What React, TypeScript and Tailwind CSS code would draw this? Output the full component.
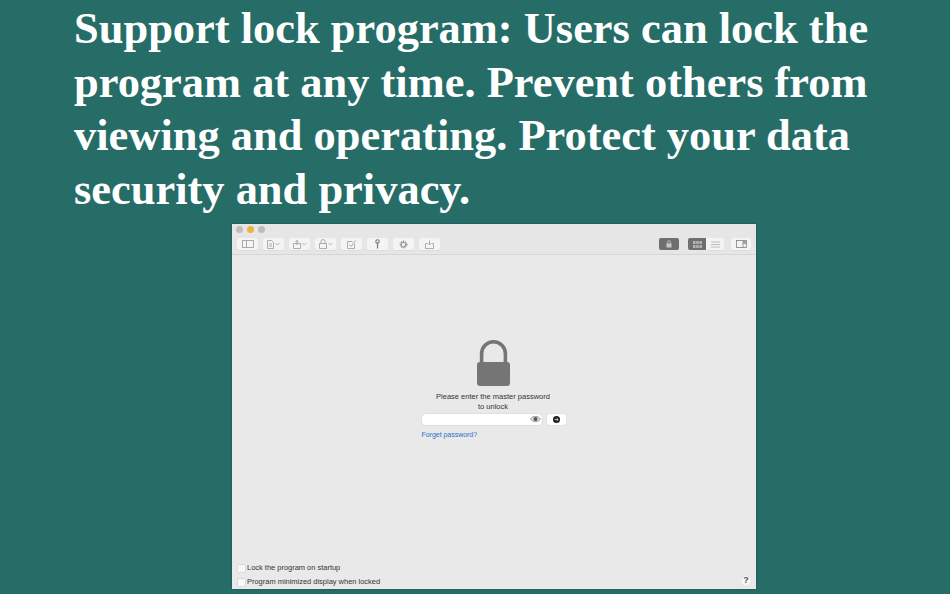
/**
 * Promo screenshot: headline over the locked app window
 */

const ICON = 'stroke-[#9a9a9a] fill-none'

function ToolButton({ children, chevron = false }: { children: React.ReactNode; chevron?: boolean }) {
  return (
    <div className="w-[21px] h-[12px] bg-[#f4f4f4] rounded-[2px] flex items-center justify-center shadow-[0_0.5px_0.5px_rgba(0,0,0,0.08)] gap-[1px]">
      {children}
      {chevron && (
        <svg width="5" height="4" viewBox="0 0 5 4" className={ICON}>
          <path d="M0.5 1 L2.5 3 L4.5 1" strokeWidth="0.7" />
        </svg>
      )}
    </div>
  )
}

function Checkbox({ label }: { label: string }) {
  return (
    <div className="flex items-center gap-[1px] h-[14px]">
      <div className="w-[9px] h-[9px] bg-[#f8f8f8] rounded-[1.5px] border border-[#d8d8d8]" />
      <span className="text-[7.5px] tracking-[-0.02px] text-[#222] opacity-90">{label}</span>
    </div>
  )
}

export default function App() {
  return (
    <div className="w-[950px] h-[594px] bg-[#266d68] overflow-hidden flex flex-col font-['Liberation_Sans',sans-serif]">
      <h1 className="pl-[74px] pt-[2px] text-[44.45px] leading-[53.5px] font-bold text-white font-['Liberation_Serif',serif] whitespace-nowrap h-[224px] shrink-0">
        Support lock program: Users can lock the
        <br />
        program at any time. Prevent others from
        <br />
        viewing and operating. Protect your data
        <br />
        security and privacy.
      </h1>

      {/* App window */}
      <div className="ml-[232px] w-[524px] h-[365px] bg-[#e9e9e9] flex flex-col shrink-0 shadow-[0_0_2px_rgba(0,0,0,0.3)]">
        {/* Title bar + toolbar */}
        <div className="h-[31px] bg-[#e6e6e6] border-b border-[#d6d6d6] flex flex-col px-[5px] pt-[2px]">
          <div className="flex gap-[4px] ml-[-1px]">
            <div className="w-[7px] h-[7px] rounded-full bg-[#bdbdbd]" />
            <div className="w-[7px] h-[7px] rounded-full bg-[#f0b040]" />
            <div className="w-[7px] h-[7px] rounded-full bg-[#bdbdbd]" />
          </div>
          <div className="flex items-center mt-[5px]">
            <div className="flex gap-[5px]">
              <ToolButton>
                <svg width="12" height="8" viewBox="0 0 12 8" className={ICON}>
                  <rect x="0.5" y="0.5" width="11" height="7" strokeWidth="0.8" />
                  <path d="M4.5 0.5 V7.5" strokeWidth="0.8" />
                </svg>
              </ToolButton>
              <ToolButton chevron>
                <svg width="7" height="9" viewBox="0 0 7 9" className={ICON}>
                  <path d="M0.5 0.5 H4.5 L6.5 2.5 V8.5 H0.5 Z M2 4 H5 M2 6 H5" strokeWidth="0.8" />
                </svg>
              </ToolButton>
              <ToolButton chevron>
                <svg width="8" height="9" viewBox="0 0 8 9" className={ICON}>
                  <path d="M0.5 3.5 H7.5 V8.5 H0.5 Z M4 5 V0.5 M2.5 2 L4 0.5 L5.5 2" strokeWidth="0.8" />
                </svg>
              </ToolButton>
              <ToolButton chevron>
                <svg width="8" height="10" viewBox="0 0 8 10" className={ICON}>
                  <path d="M0.5 4.5 H7.5 V9.5 H0.5 Z M2 4.5 V2.5 A2 2 0 0 1 6 2.5 V4.5" strokeWidth="0.8" />
                </svg>
              </ToolButton>
              <ToolButton>
                <svg width="9" height="9" viewBox="0 0 9 9" className={ICON}>
                  <path d="M7.5 3.5 V8.5 H0.5 V1.5 H5.5 M2.5 4.5 L4 6.5 L8.5 0.5" strokeWidth="0.8" />
                </svg>
              </ToolButton>
              <ToolButton>
                <svg width="5" height="10" viewBox="0 0 5 10" className="stroke-[#777] fill-none">
                  <circle cx="2.5" cy="2.5" r="1.7" strokeWidth="1.1" />
                  <path d="M2.5 4 V9.5" strokeWidth="1.2" />
                </svg>
              </ToolButton>
              <ToolButton>
                <svg width="9" height="9" viewBox="0 0 9 9" className="stroke-[#8a8a8a] fill-none">
                  <circle cx="4.5" cy="4.5" r="2.4" strokeWidth="1.6" strokeDasharray="1.2 0.4" />
                  <circle cx="4.5" cy="4.5" r="3.6" strokeWidth="0.8" strokeDasharray="1.2 1.1" />
                </svg>
              </ToolButton>
              <ToolButton>
                <svg width="9" height="9" viewBox="0 0 9 9" className={ICON}>
                  <path d="M2.5 3.5 H0.5 V8.5 H8.5 V3.5 H6.5 M4.5 0.5 V5 M3 3.5 L4.5 5 L6 3.5" strokeWidth="0.8" />
                </svg>
              </ToolButton>
            </div>
            <div className="ml-auto flex items-center">
              <div className="w-[20px] h-[12px] bg-[#6f6f6f] rounded-[2px] flex items-center justify-center">
                <svg width="6" height="8" viewBox="0 0 6 8">
                  <path d="M1.5 3.5 V2.2 A1.5 1.5 0 0 1 4.5 2.2 V3.5" fill="none" stroke="#c8c8c8" strokeWidth="0.8" />
                  <rect x="0.5" y="3.3" width="5" height="4.2" fill="#c8c8c8" />
                </svg>
              </div>
              <div className="ml-[9px] w-[18px] h-[12px] bg-[#6f6f6f] rounded-l-[2px] flex items-center justify-center">
                <svg width="9" height="7" viewBox="0 0 9 7" fill="#b5b5b5">
                  <rect x="0" y="0" width="2.5" height="3" />
                  <rect x="3.2" y="0" width="2.5" height="3" />
                  <rect x="6.4" y="0" width="2.5" height="3" />
                  <rect x="0" y="4" width="2.5" height="3" />
                  <rect x="3.2" y="4" width="2.5" height="3" />
                  <rect x="6.4" y="4" width="2.5" height="3" />
                </svg>
              </div>
              <div className="w-[18px] h-[12px] bg-[#f4f4f4] rounded-r-[2px] flex items-center justify-center shadow-[0_0.5px_0.5px_rgba(0,0,0,0.08)]">
                <svg width="9" height="7" viewBox="0 0 9 7" className="stroke-[#b0b0b0] fill-none">
                  <path d="M0 1 H9 M0 3.5 H9 M0 6 H9" strokeWidth="0.8" />
                </svg>
              </div>
              <div className="ml-[7px] w-[20px] h-[12px] bg-[#f4f4f4] rounded-[2px] flex items-center justify-center shadow-[0_0.5px_0.5px_rgba(0,0,0,0.08)]">
                <svg width="11" height="8" viewBox="0 0 11 8" className="stroke-[#808080] fill-none">
                  <rect x="0.5" y="0.5" width="10" height="7" strokeWidth="0.8" />
                  <path d="M7 0.5 V7.5" strokeWidth="0.8" />
                  <rect x="7" y="0.5" width="3.5" height="3.5" fill="#a0a0a0" stroke="none" />
                </svg>
              </div>
            </div>
          </div>
        </div>

        {/* Lock form */}
        <div className="flex-1 flex flex-col items-center pt-[85px] relative">
          <svg width="33" height="46" viewBox="0 0 33 46" className="ml-[-1px]">
            <path d="M4.6 24 V13.7 A11.9 11.9 0 0 1 28.4 13.7 V24" fill="none" stroke="#757575" strokeWidth="3.6" />
            <rect x="0" y="22" width="33" height="24" rx="3" fill="#757575" />
          </svg>
          <p className="mt-[6px] text-[7.5px] leading-[9.5px] text-center text-[#222] opacity-90 w-[130px] ml-[-2px]">
            Please enter the master password
            <br />
            to unlock
          </p>
          <div className="mt-[2px] flex items-center gap-[5px] ml-[-1px]">
            <div className="w-[120px] h-[11px] bg-white rounded-[3px] shadow-[0_0_1px_rgba(0,0,0,0.35)] flex items-center justify-end pr-[1px]">
              <svg width="11" height="8" viewBox="0 0 11 8">
                <path d="M0.5 4 C3 0.5 8 0.5 10.5 4 C8 7.5 3 7.5 0.5 4 Z" fill="#e0e0e0" stroke="#777" strokeWidth="0.7" />
                <circle cx="5.5" cy="4" r="2" fill="#555" />
              </svg>
            </div>
            <div className="w-[19px] h-[11px] mt-[1px] bg-white rounded-[2px] shadow-[0_0_1px_rgba(0,0,0,0.3)] flex items-center justify-center">
              <svg width="7" height="7" viewBox="0 0 7 7">
                <circle cx="3.5" cy="3.5" r="3.5" fill="#1d1d1d" />
                <path d="M1.5 3.5 H5 M3.6 2 L5.2 3.5 L3.6 5" fill="none" stroke="#fff" strokeWidth="0.7" />
              </svg>
            </div>
          </div>
          <div className="w-[144px] mt-[5px] ml-[-1px]">
            <span className="text-[7px] tracking-[-0.03px] leading-[10px] block text-[#2b6fd0]">Forget password?</span>
          </div>

          <div className="absolute right-[5px] bottom-[3px] w-[10px] h-[10px] rounded-full bg-[#f7f7f7] flex items-center justify-center text-[9px] font-bold text-[#555] shadow-[0_0_1px_rgba(0,0,0,0.2)]">
            ?
          </div>
          <div className="mt-auto self-start pl-[5px] flex flex-col">
            <Checkbox label="Lock the program on startup" />
            <Checkbox label="Program minimized display when locked" />
          </div>
        </div>
      </div>
    </div>
  )
}
